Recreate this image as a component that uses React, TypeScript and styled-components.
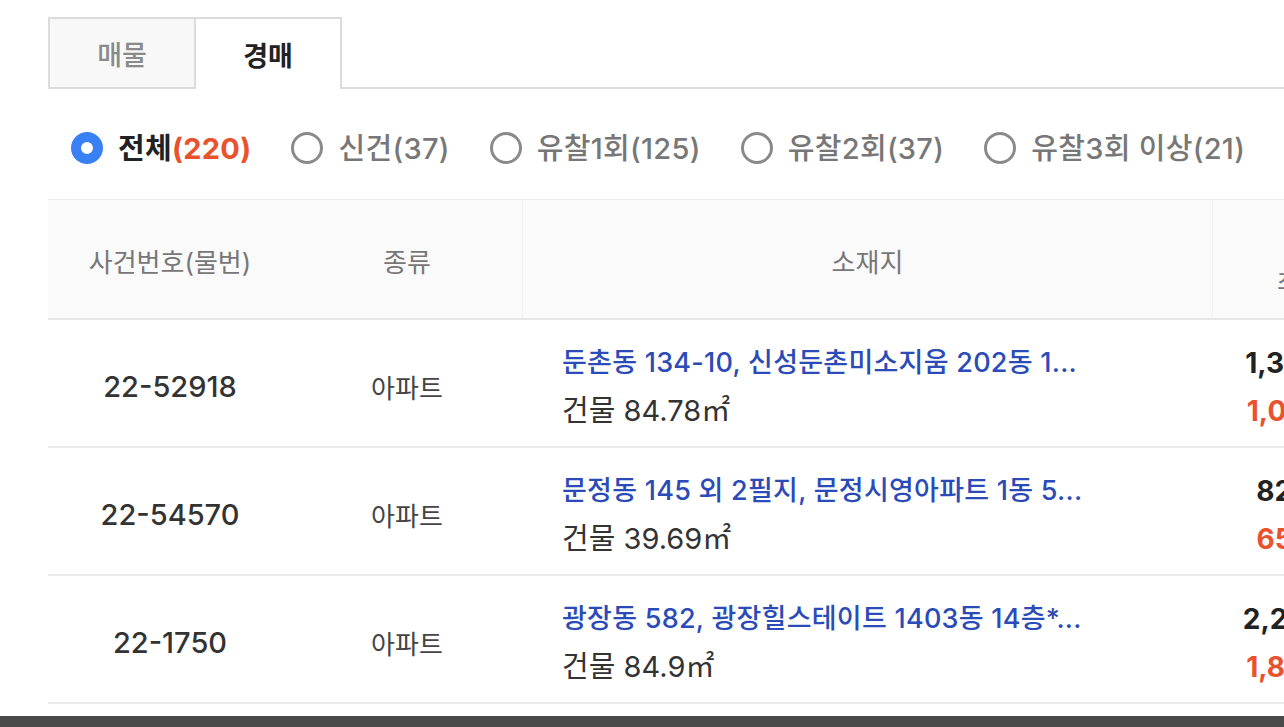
import React from "react";
import styled, { createGlobalStyle } from "styled-components";

const GlobalStyle = createGlobalStyle`
  html, body {
    margin: 0;
    padding: 0;
    background: #ffffff;
    overflow: hidden;
  }
  body {
    font-family: "Inter", "Noto Sans CJK KR", sans-serif;
    color: #333333;
  }
  * { box-sizing: border-box; }
`;

const Page = styled.div`
  display: flex;
  flex-direction: column;
  height: 100vh;
  width: 100vw;
  overflow: hidden;
`;

const Content = styled.div`
  padding: 17px 0 0 48px;
  width: 1500px;
`;

const TabBar = styled.div`
  display: flex;
  height: 72px;
`;

const Tab = styled.div<{ $active?: boolean }>`
  display: flex;
  align-items: center;
  justify-content: center;
  width: ${(p) => (p.$active ? "146px" : "148px")};
  height: 72px;
  border: 2px solid #dcdcdc;
  border-left-width: ${(p) => (p.$active ? "0" : "2px")};
  border-bottom-width: ${(p) => (p.$active ? "0" : "2px")};
  background: ${(p) => (p.$active ? "#ffffff" : "#f8f8f8")};
  color: ${(p) => (p.$active ? "#222222" : "#8a8a8a")};
  font-size: 27px;
  font-weight: ${(p) => (p.$active ? 700 : 500)};
`;

const TabFiller = styled.div`
  flex: 1;
  border-bottom: 2px solid #dcdcdc;
`;

const RadioRow = styled.div`
  display: flex;
  align-items: center;
  gap: 40px;
  height: 110px;
  padding: 8px 0 0 23px;
`;

const RadioItem = styled.label`
  display: flex;
  align-items: center;
  gap: 15px;
  font-size: 29px;
  letter-spacing: 0.3px;
  line-height: 1;
  white-space: nowrap;
`;

const RadioMark = styled.span<{ $checked?: boolean }>`
  display: inline-block;
  flex: none;
  width: 32px;
  height: 32px;
  border-radius: 50%;
  background: #ffffff;
  border: ${(p) => (p.$checked ? "10px solid #3a80f5" : "3px solid #8a8a8a")};
`;

const RadioText = styled.span<{ $checked?: boolean }>`
  color: ${(p) => (p.$checked ? "#222222" : "#777777")};
  font-weight: ${(p) => (p.$checked ? 700 : 500)};
`;

const Count = styled.span`
  color: #e9522c;
  font-weight: 700;
`;

const Table = styled.div`
  display: grid;
  grid-template-columns: 244px 230px 690px 272px;
`;

const HeaderCell = styled.div<{ $divider?: boolean }>`
  display: flex;
  flex-direction: column;
  align-items: center;
  justify-content: center;
  height: 121px;
  padding-top: 8px;
  background: #fafafa;
  border-top: 1px solid #ececec;
  border-bottom: 2px solid #e6e6e6;
  border-left: ${(p) => (p.$divider ? "1px solid #f2f2f2" : "none")};
  color: #777777;
  font-size: 26px;
  line-height: 40px;
  white-space: nowrap;
`;

const HeaderLine = styled.span`
  display: block;
`;

const Cell = styled.div`
  display: flex;
  flex-direction: column;
  align-items: center;
  justify-content: center;
  height: 128px;
  padding-top: 7px;
  border-bottom: 2px solid #ebebeb;
  white-space: nowrap;
`;

const CaseNo = styled.span`
  font-size: 29px;
  font-weight: 500;
  color: #333333;
`;

const Kind = styled.span`
  font-size: 26px;
  color: #444444;
`;

const AddressCell = styled(Cell)`
  align-items: flex-start;
  padding-left: 40px;
  gap: 8px;
`;

const Address = styled.span`
  font-size: 27px;
  font-weight: 500;
  letter-spacing: 0.25px;
  color: #2a4bb8;
  line-height: 40px;
`;

const Area = styled.span`
  font-size: 29px;
  color: #333333;
  line-height: 40px;
`;

const PriceCell = styled(Cell)`
  gap: 8px;
`;

const Price = styled.span<{ $low?: boolean }>`
  font-size: 28px;
  font-weight: 700;
  line-height: 40px;
  color: ${(p) => (p.$low ? "#e9522c" : "#222222")};
`;

const BottomBar = styled.div`
  margin-top: auto;
  height: 11px;
  background: #4a4a4a;
`;

const filters = [
  { label: "전체", count: 220, checked: true },
  { label: "신건", count: 37 },
  { label: "유찰1회", count: 125 },
  { label: "유찰2회", count: 37 },
  { label: "유찰3회 이상", count: 21 },
];

const rows = [
  {
    no: "22-52918",
    kind: "아파트",
    address: "둔촌동 134-10, 신성둔촌미소지움 202동 1...",
    area: "84.78",
    price: "1,340,000,000",
    low: "1,072,000,000",
  },
  {
    no: "22-54570",
    kind: "아파트",
    address: "문정동 145 외 2필지, 문정시영아파트 1동 5...",
    area: "39.69",
    price: "820,000,000",
    low: "656,000,000",
  },
  {
    no: "22-1750",
    kind: "아파트",
    address: "광장동 582, 광장힐스테이트 1403동 14층*...",
    area: "84.9",
    price: "2,280,000,000",
    low: "1,824,000,000",
  },
];

export default function App() {
  return (
    <Page>
      <GlobalStyle />
      <Content>
        <TabBar>
          <Tab>매물</Tab>
          <Tab $active>경매</Tab>
          <TabFiller />
        </TabBar>
        <RadioRow>
          {filters.map((f) => (
            <RadioItem key={f.label}>
              <RadioMark $checked={f.checked} />
              <RadioText $checked={f.checked}>
                {f.label}
                {f.checked ? <Count>({f.count})</Count> : `(${f.count})`}
              </RadioText>
            </RadioItem>
          ))}
        </RadioRow>
        <Table>
          <HeaderCell>사건번호(물번)</HeaderCell>
          <HeaderCell>종류</HeaderCell>
          <HeaderCell $divider>소재지</HeaderCell>
          <HeaderCell $divider>
            <HeaderLine>감정가</HeaderLine>
            <HeaderLine>최저매각가격</HeaderLine>
          </HeaderCell>
          {rows.map((r) => (
            <React.Fragment key={r.no}>
              <Cell>
                <CaseNo>{r.no}</CaseNo>
              </Cell>
              <Cell>
                <Kind>{r.kind}</Kind>
              </Cell>
              <AddressCell>
                <Address>{r.address}</Address>
                <Area>건물 {r.area}㎡</Area>
              </AddressCell>
              <PriceCell>
                <Price>{r.price}</Price>
                <Price $low>{r.low}</Price>
              </PriceCell>
            </React.Fragment>
          ))}
        </Table>
      </Content>
      <BottomBar />
    </Page>
  );
}
